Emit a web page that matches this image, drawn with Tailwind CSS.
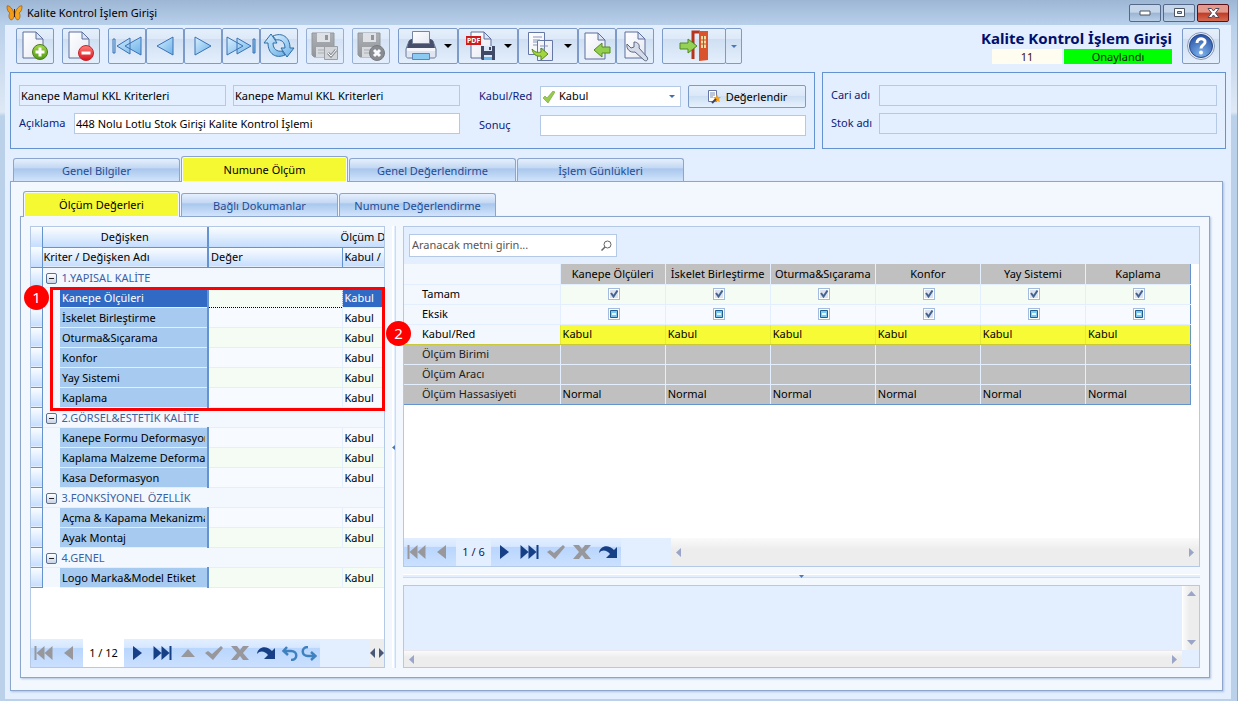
<!DOCTYPE html>
<html lang="tr">
<head>
  <meta charset="UTF-8" />
  <meta name="viewport" content="width=device-width, initial-scale=1.0"/>
  <title>Kalite Kontrol İşlem Girişi</title>
  <script src="https://cdn.jsdelivr.net/npm/@tailwindcss/browser@4"></script>
  <style>
    body {
      font-family: 'Noto Sans', 'Open Sans', sans-serif;
    }

    .tool {
      height: 36px;
      display: flex;
      align-items: center;
      justify-content: center;
      border: 1px solid #7d9bc8;
      border-radius: 2px;
      background: linear-gradient(#e6f0fc 0%, #dde9f8 28%, #cfdff2 30%, #e4effc 100%);
    }

    .tab {
      border: 1px solid #8ca5cc;
      border-bottom: 0;
      border-radius: 3px 3px 0 0;
      padding-top: 1px;
      color: #1e4c95;
      background: linear-gradient(#e6f0fd 0%, #c3d8f3 40%, #a9c7ed 45%, #d2e4fb 100%);
    }

    .tab-active {
      color: #000;
      background: #f5f932;
      box-shadow: inset 0 0 0 1px #f4f8ff;
    }

    .field {
      height: 21px;
      border: 1px solid #b3c9e6;
      padding: 0 1px 1px;
      color: #000;
    }

    .head {
      background: linear-gradient(#fbfdff, #c5ddfd);
    }
  </style>
</head>
<body class="flex min-h-screen flex-col border-r border-[#4cc4e4] bg-[linear-gradient(to_bottom,#9cb6d4_0,#b9d0ea_25px,#dfe9f5_112px,#bbd1ea_116px,#bbd1ea_100%)] text-[11px] leading-4 text-black">

  <!-- icon library -->
  <svg class="absolute h-0 w-0">
    <defs>
      <linearGradient id="blue" x1="0" y1="0" x2="1" y2="1"><stop offset="0" stop-color="#d8efff"/><stop offset="1" stop-color="#6bb1e8"/></linearGradient>
      <linearGradient id="green" x1="0" y1="0" x2="0" y2="1"><stop offset="0" stop-color="#a5d84a"/><stop offset="1" stop-color="#4f9a12"/></linearGradient>
      <linearGradient id="red" x1="0" y1="0" x2="0" y2="1"><stop offset="0" stop-color="#ff8078"/><stop offset="1" stop-color="#d8101c"/></linearGradient>
      <linearGradient id="paper" x1="0" y1="0" x2="1" y2="1"><stop offset="0" stop-color="#fff"/><stop offset="1" stop-color="#e6e9f4"/></linearGradient>
      <linearGradient id="grey" x1="0" y1="0" x2="0" y2="1"><stop offset="0" stop-color="#9c9c9c"/><stop offset="1" stop-color="#777"/></linearGradient>
      <radialGradient id="ball" cx=".5" cy=".85" r=".8"><stop offset="0" stop-color="#7fb4ee"/><stop offset="1" stop-color="#2d56a8"/></radialGradient>
    </defs>
    <symbol id="page" viewBox="0 0 22 28"><path d="M1 1h13l7 7v19H1z" fill="url(#paper)" stroke="#5d6f9d"/><path d="M14 1v7h7z" fill="#dfe4f2" stroke="#5d6f9d"/></symbol>
    <symbol id="floppy" viewBox="0 0 24 26"><path d="M1 1h22v24H3l-2-2z" fill="url(#grey)" stroke="#7b7b7b"/><path d="M6 1h13v9H6z" fill="#ddd"/><path d="M14 3h3v5h-3z" fill="#777"/><path d="M5 15h15v10H5z" fill="#d2d2d2"/><path d="M7 18h11M7 21h11" stroke="#999"/></symbol>
    <symbol id="first" viewBox="0 0 18 14"><path d="M0 0h2v14H0zM10 0v14L2 7zM18 0v14L10 7z"/></symbol>
    <symbol id="prev" viewBox="0 0 9 14"><path d="M9 0v14L0 7z"/></symbol>
    <symbol id="next" viewBox="0 0 9 14"><path d="M0 0v14l9-7z"/></symbol>
    <symbol id="last" viewBox="0 0 18 14"><path d="M16 0h2v14h-2zM8 0v14l8-7zM0 0v14l8-7z"/></symbol>
    <symbol id="up" viewBox="0 0 14 8"><path d="M0 8h14L7 0z"/></symbol>
    <symbol id="ok" viewBox="0 0 18 14"><path d="M0 7l3-2 4 3 9-8 2 2L8 14z"/></symbol>
    <symbol id="cancel" viewBox="0 0 18 14"><path d="M0 0h6l3 4 3-4h6l-6 7 6 7h-6l-3-4-3 4H0l6-7z"/></symbol>
    <symbol id="redo" viewBox="0 0 19 13"><path d="M0 7C1-1 10-2 15 4l3-3v11H7l4-4C8 4 3 3 0 7z"/></symbol>
    <symbol id="undo" viewBox="0 0 16 15"><path d="M5 1L1.500 5 6 9M2 5h7c7 0 7 9 0 9" fill="none" stroke="currentColor" stroke-width="2.500"/></symbol>
    <symbol id="redo2" viewBox="0 0 16 15"><path d="M7 1C0 1 0 10 7 10h7M10 6l4.500 4-4.500 4" fill="none" stroke="currentColor" stroke-width="2.500"/></symbol>
    <symbol id="down" viewBox="0 0 8 4"><path d="M0 0h8L4 4z"/></symbol>
  </svg>

  <header class="flex h-[25px] shrink-0 items-center pl-[6px] pr-[8px]">
    <svg class="mr-1 h-[17px] w-[17px]" viewBox="0 0 17 17">
      <path d="M8 9C6 3 2 1 1 2c0 4 1 6 3 7-2 2-1 6 1 7 2 0 3-3 3.500-5z" fill="#f29a1a" stroke="#8a4c0c" stroke-width=".6"/>
      <path d="M9 9c2-6 6-8 7-7 0 4-1 6-3 7 2 2 1 6-1 7-2 0-3-3-3.500-5z" fill="#f6a51f" stroke="#8a4c0c" stroke-width=".6"/>
      <path d="M8.500 5v8" stroke="#3a1c04"/>
    </svg>
    <h1 class="flex-1 pt-px text-[11px]">Kalite Kontrol İşlem Girişi</h1>
    <div class="flex gap-[2px]">
      <button aria-label="Küçült" class="flex h-[18px] w-8 items-center justify-center rounded-xs border border-[#54698a] bg-[linear-gradient(#c5d6ea_45%,#9cb5d2_50%,#b9cfe8)]"><svg width="12" height="6"><path d="M1 1h10v4H1z" fill="#fff" stroke="#4b5563"/></svg></button>
      <button aria-label="Büyüt" class="flex h-[18px] w-8 items-center justify-center rounded-xs border border-[#54698a] bg-[linear-gradient(#c5d6ea_45%,#9cb5d2_50%,#b9cfe8)]"><svg width="11" height="9"><path d="M.5.5h10v8H.5zM3.500 3.500h4v2h-4z" fill="#fff" stroke="#4b5563" fill-rule="evenodd"/></svg></button>
      <button aria-label="Kapat" class="flex h-[18px] w-8 items-center justify-center rounded-xs border border-[#5a1018] bg-[linear-gradient(#e39a8c_45%,#c03a28_50%,#d56a50)]"><svg width="13" height="10" viewBox="0 0 13 10"><path d="M1 .5h3.500l2 2.500 2-2.500H12L8.500 5 12 9.500H8.500L6.500 7l-2 2.500H1L4.500 5z" fill="#fff" stroke="#4b4b5f"/></svg></button>
    </div>
  </header>

  <main class="mb-[2px] ml-[5px] mr-[6px] flex flex-1 flex-col bg-[#e3efff] pb-2 pt-[3px]">
    <div class="flex shrink-0 pl-[11px] pr-[11px]">
      <button aria-label="Yeni" class="tool mr-2 w-[38px]"><svg width="28" height="32" viewBox="0 0 28 32"><use href="#page" x="1" y="1" width="22" height="28"/><circle cx="19" cy="22" r="7.500" fill="url(#green)" stroke="#4c7a1c"/><path d="M19 17.500v9M14.500 22h9" stroke="#fff" stroke-width="3"/></svg></button>
      <button aria-label="Sil" class="tool mr-2 w-[38px]"><svg width="28" height="32" viewBox="0 0 28 32"><use href="#page" x="1" y="1" width="22" height="28"/><circle cx="19" cy="23" r="7.500" fill="url(#red)" stroke="#c4262c"/><path d="M14.500 21.500h9v3h-9z" fill="#fff"/></svg></button>
      <button aria-label="İlk" class="tool w-[38px]"><svg width="30" height="20" viewBox="0 0 30 20"><path d="M1 3h2v14H1zM18 2v16L5 10zM29 1v18L13 10z" fill="url(#blue)" stroke="#3a72b4"/></svg></button>
      <button aria-label="Önceki" class="tool w-[38px]"><svg width="20" height="20" viewBox="0 0 20 20"><path d="M18 1v18L2 10z" fill="url(#blue)" stroke="#3a72b4"/></svg></button>
      <button aria-label="Sonraki" class="tool w-[38px]"><svg width="20" height="20" viewBox="0 0 20 20"><path d="M2 1v18l16-9z" fill="url(#blue)" stroke="#3a72b4"/></svg></button>
      <button aria-label="Son" class="tool w-[38px]"><svg width="30" height="20" viewBox="0 0 30 20"><path d="M27 3h2v14h-2zM11 2v16l14-8zM1 1v18l16-9z" fill="url(#blue)" stroke="#3a72b4"/></svg></button>
      <button aria-label="Yenile" class="tool mr-2 w-[38px]"><svg width="32" height="26" viewBox="0 0 32 26"><path d="M1 10l7-9 6 9h-4c0 6 4 9 9 8l3 4C13 26 5 21 5 10z" fill="url(#blue)" stroke="#2f6ca5"/><path d="M31 15l-7 9-6-9h4c0-6-4-9-9-8l-3-4C19-1 27 4 27 15z" fill="url(#blue)" stroke="#2f6ca5"/></svg></button>
      <button aria-label="Kaydet" class="tool mr-2 w-[38px] opacity-75"><svg width="30" height="30" viewBox="0 0 30 30"><use href="#floppy" x="1" y="1" width="24" height="26"/><path d="M14.500 15.500h13v13h-13z" fill="#ccc" stroke="#858585"/><path d="M18 22l3 3 5-6" fill="none" stroke="#777" stroke-width="3"/><path d="M18 22l3 3 5-6" fill="none" stroke="#fff"/></svg></button>
      <button aria-label="Kaydetme" class="tool mr-2 w-[38px] opacity-75"><svg width="30" height="30" viewBox="0 0 30 30"><use href="#floppy" x="1" y="1" width="24" height="26"/><circle cx="21" cy="22" r="7.500" fill="#6b6b6b" stroke="#555"/><path d="M18 19l6 6M24 19l-6 6" stroke="#fff" stroke-width="3"/></svg></button>
      <button aria-label="Yazdır" class="tool w-[60px] gap-[7px]"><svg width="32" height="32" viewBox="0 0 32 32"><path d="M4 11l3-1h18l3 1 3 8v7c0 1-1 2-2 2H3c-1 0-2-1-2-2v-7z" fill="#dfe5f1" stroke="#6a7a9c"/><path d="M4 11c1-2 3-2 3-2h18s2 0 3 2l2 7H2z" fill="#46506a"/><path d="M7.500 1.500h17v12h-17z" fill="url(#paper)" stroke="#7785a5"/><path d="M2 18h28v3H2z" fill="#f4f6fb"/><path d="M7.500 23.500h17v6h-17z" fill="#8ccaf2" stroke="#5f86b5"/></svg><svg width="8" height="4"><use href="#down"/></svg></button>
      <button aria-label="PDF" class="tool w-[60px] gap-[7px]"><svg width="32" height="32" viewBox="0 0 32 32"><use href="#page" x="5" y="1" width="22" height="28"/><path d="M1 6h15v9H1z" fill="#cc1c20"/><text x="2" y="13" font-size="7" font-weight="700" fill="#fff">PDF</text><path d="M16 16h14v14H17l-1-1z" fill="#3e4966"/><path d="M19 16h8v5h-8zM19 25h8v5h-8z" fill="#dbe6f6"/><path d="M24 17h2v3h-2z" fill="#3e4966"/><path d="M19 27h8v3h-8z" fill="#69b7ef"/></svg><svg width="8" height="4"><use href="#down"/></svg></button>
      <button aria-label="Kopyala" class="tool w-[60px] gap-[7px]"><svg width="32" height="32" viewBox="0 0 32 32"><path d="M3.500 2.500h16v22h-16zM12.500 10.500h15v20h-15z" fill="url(#paper)" stroke="#6577a6"/><path d="M8 7h9M8 10h7M8 12h4M8 15h4M15 16h8M15 19h5" stroke="#8795bb"/><path d="M7 19c3 3 5 4 9 3v-4l7 6-7 6v-4c-5 1-8-2-9-7z" fill="#a4d63c" stroke="#568b1c"/></svg><svg width="8" height="4"><use href="#down"/></svg></button>
      <button aria-label="Geri al" class="tool w-[38px]"><svg width="28" height="32" viewBox="0 0 28 32"><use href="#page" x="1" y="2" width="22" height="28"/><path d="M11 20l8-7v4h8v6h-8v4z" fill="#93cf4e" stroke="#568b1c"/></svg></button>
      <button aria-label="Ayarlar" class="tool mr-2 w-[38px]"><svg width="28" height="32" viewBox="0 0 28 32"><use href="#page" x="3" y="1" width="22" height="28"/><path d="M6 14l4 4 3-1v-5c4 0 6 3 5 6l8 9c2 3-1 5-3 3l-9-8c-5 1-9-3-8-8z" fill="#d5dbe8" stroke="#5b6781"/></svg></button>
      <div class="flex">
        <button aria-label="Çıkış" class="tool w-[64px]"><svg width="30" height="32" viewBox="0 0 30 32"><path d="M14 29V2h7" fill="none" stroke="#b8331c" stroke-width="3"/><path d="M20 1h9v29l-9 1z" fill="#d9532c"/><path d="M22 6h5v12h-5z" fill="#f5dca0"/><path d="M24.500 6v12M22 10h5M22 14h5" stroke="#b8552c"/><path d="M1 13h8V9l9 7-9 7v-4H1z" fill="#94d154" stroke="#4e8a24"/></svg></button>
        <button aria-label="Çıkış seçenekleri" class="tool -ml-px w-[17px]"><svg class="fill-[#4d78b8]" width="6" height="3" viewBox="0 0 8 4"><use href="#down"/></svg></button>
      </div>
      <div class="ml-auto mr-[10px]">
        <h2 class="h-[21px] text-right text-[15px] font-bold leading-5 text-[#00106c]">Kalite Kontrol İşlem Girişi</h2>
        <div class="flex justify-end gap-[2px] text-center text-[11px] leading-[15px]">
          <div class="w-[70px] bg-[#fffcf0] text-[#30101c]">11</div>
          <div class="w-[108px] bg-[#00ff00] text-[#102010]">Onaylandı</div>
        </div>
      </div>
      <button aria-label="Yardım" class="tool w-[38px]"><svg width="30" height="30" viewBox="0 0 30 30"><circle cx="15" cy="15" r="13.500" fill="#e8eef8" stroke="#8a9ab8"/><circle cx="15" cy="15" r="11.500" fill="url(#ball)" stroke="#27488c"/><path d="M11 12c0-6 9-5 8-.5-.5 2.500-4 2.500-4 6" fill="none" stroke="#fff" stroke-width="3"/><circle cx="15" cy="21.500" r="2" fill="#fff"/></svg></button>
    </div>

    <div class="mt-2 flex shrink-0 gap-[7px] pl-[5px] pr-[5px] text-[#0c1c7c]">
      <section class="flex h-[77px] w-[805px] gap-[19px] border border-[#6593cf] px-2 pt-3">
        <div class="flex w-[441px] flex-col gap-[7px]">
          <div class="flex gap-[7px]">
            <input aria-label="Kriter kodu" class="field w-[207px]" value="Kanepe Mamul KKL Kriterleri" />
            <input aria-label="Kriter adı" class="field min-w-0 flex-1" value="Kanepe Mamul KKL Kriterleri" />
          </div>
          <div class="flex items-center">
            <label for="aciklama" class="w-[55px] pb-[2px]">Açıklama</label>
            <input id="aciklama" class="field min-w-0 flex-1 bg-white" value="448 Nolu Lotlu Stok Girişi Kalite Kontrol İşlemi" />
          </div>
        </div>
        <div class="flex flex-1 flex-col gap-[7px]">
          <div class="flex h-[23px] items-center">
            <label for="kabul" class="w-[61px] pb-[2px]">Kabul/Red</label>
            <div class="relative w-[141px]">
              <select id="kabul" class="field block w-full appearance-none bg-white pl-[18px]!"><option>Kabul</option><option>Red</option></select>
              <svg class="pointer-events-none absolute left-[3px] top-[5px]" width="12" height="12" viewBox="0 0 12 12"><path d="M0 7l2-2 2 2 6-7 2 1-7 11z" fill="#9aca4e" stroke="#6ba236" stroke-width=".6"/></svg>
              <svg class="pointer-events-none absolute right-[6px] top-[9px] fill-[#3f6fae]" width="6" height="3" viewBox="0 0 8 4"><use href="#down"/></svg>
            </div>
            <button class="ml-[7px] flex h-[23px] flex-1 items-center justify-center gap-[5px] rounded-xs border border-[#7d9bc8] bg-[linear-gradient(#e6f0fc,#dbe8f8_45%,#cddff2_50%,#e6f1fd)] text-black">
              <svg width="14" height="14" viewBox="0 0 14 14"><path d="M1.500.5h8v11h-8z" fill="#fff" stroke="#6577a6"/><path d="M3 3h5M3 5h5M3 7h3" stroke="#7d8db5"/><path d="M10 4l1 3 3 0-2 2 1 3-3-1-3 1 1-3-2-2h3z" fill="#f8a21c"/><path d="M9 9l-4 4" stroke="#3c4664" stroke-width="2"/></svg>
              Değerlendir
            </button>
          </div>
          <div class="flex items-center">
            <label for="sonuc" class="w-[61px] pb-[2px]">Sonuç</label>
            <input id="sonuc" class="field min-w-0 flex-1 bg-white" />
          </div>
        </div>
      </section>
      <section class="flex h-[77px] flex-1 flex-col gap-[7px] border border-[#6593cf] px-2 pt-3">
        <div class="flex items-center"><label for="cari" class="w-[48px] pb-[2px]">Cari adı</label><input id="cari" class="field min-w-0 flex-1" /></div>
        <div class="flex items-center"><label for="stok" class="w-[48px] pb-[2px]">Stok adı</label><input id="stok" class="field min-w-0 flex-1" /></div>
      </section>
    </div>

    <nav class="relative z-10 mt-[7px] flex h-[25px] shrink-0 items-end gap-px pl-2">
      <button class="tab h-[23px] w-[167px]">Genel Bilgiler</button>
      <button class="tab tab-active -mb-px h-[26px] w-[167px]">Numune Ölçüm</button>
      <button class="tab h-[23px] w-[167px]">Genel Değerlendirme</button>
      <button class="tab h-[23px] w-[167px]">İşlem Günlükleri</button>
    </nav>

    <div class="ml-[5px] mr-2 flex flex-1 flex-col border border-[#8ca5cc] bg-[#f3f8ff] pb-3 pl-[9px] pr-3 pt-[9px] shadow-[1px_1px_2px_#b0c2dd]">
      <nav class="relative z-10 flex h-[25px] shrink-0 items-end gap-px pl-[3px]">
        <button class="tab tab-active -mb-px h-[26px] w-[157px]">Ölçüm Değerleri</button>
        <button class="tab h-[23px] w-[157px]">Bağlı Dokumanlar</button>
        <button class="tab h-[23px] w-[157px]">Numune Değerlendirme</button>
      </nav>

      <div class="flex flex-1 border border-[#8ca5cc] p-[9px] shadow-[1px_1px_2px_#b0c2dd]">

        <!-- criteria tree -->
        <section class="relative flex w-[355px] flex-col border border-[#b3c9e6] bg-white">
          <div class="flex-1 overflow-hidden">
            <table class="w-[530px] table-fixed border-collapse">
              <colgroup><col class="w-[11px]"/><col class="w-[18px]"/><col class="w-[148px]"/><col class="w-[134px]"/><col class="w-[219px]"/></colgroup>
              <thead>
                <tr class="h-5">
                  <th class="head border-r border-[#6593cf] p-0"></th>
                  <th colspan="2" class="head border-b border-r-2 border-[#6593cf] p-0 font-normal">Değişken</th>
                  <th colspan="2" class="head border-b border-[#6593cf] p-0 pr-1 font-normal">Ölçüm Değerleri</th>
                </tr>
                <tr class="h-5 text-left">
                  <th class="head border-b border-r border-[#6593cf] p-0"></th>
                  <th colspan="2" class="head border-b border-r-2 border-[#6593cf] p-0 pl-px font-normal">Kriter / Değişken Adı</th>
                  <th class="head border-b border-r border-[#6593cf] p-0 pl-[2px] font-normal">Değer</th>
                  <th class="head border-b border-[#6593cf] p-0 pl-[2px] font-normal">Kabul / Red</th>
                </tr>
              </thead>
              <tbody id="criteria"></tbody>
            </table>
          </div>
          <div class="flex h-7 bg-[#e3efff] text-[#98989c]">
            <div class="flex w-[289px] items-center bg-[linear-gradient(#e3efff_0,#d6e7ff_30%,#b9d6fd_34%,#cbe0ff_100%)]">
              <button aria-label="İlk kayıt" class="ml-[3px]"><svg class="fill-current" width="19" height="14"><use href="#first"/></svg></button>
              <button aria-label="Önceki kayıt" class="ml-[11px]"><svg class="fill-current" width="9" height="14"><use href="#prev"/></svg></button>
              <span class="ml-[10px] h-full w-[41px] bg-white text-center leading-7 text-black">1 / 12</span>
              <button aria-label="Sonraki kayıt" class="ml-[9px] text-[#163f86]"><svg class="fill-current" width="9" height="14"><use href="#next"/></svg></button>
              <button aria-label="Son kayıt" class="ml-[11px] text-[#163f86]"><svg class="fill-current" width="19" height="14"><use href="#last"/></svg></button>
              <button aria-label="Düzenle" class="ml-[9px]"><svg class="fill-current" width="14" height="8"><use href="#up"/></svg></button>
              <button aria-label="Onayla" class="ml-[10px]"><svg class="fill-current" width="18" height="14"><use href="#ok"/></svg></button>
              <button aria-label="Vazgeç" class="ml-2"><svg class="fill-current" width="18" height="14"><use href="#cancel"/></svg></button>
              <button aria-label="Yenile" class="ml-2 text-[#163f86]"><svg class="fill-current" width="19" height="13"><use href="#redo"/></svg></button>
              <button aria-label="Geri" class="ml-[6px] text-[#3f80bf]"><svg class="fill-none" width="16" height="15"><use href="#undo"/></svg></button>
              <button aria-label="İleri" class="ml-[3px] text-[#3f80bf]"><svg class="fill-none" width="16" height="15"><use href="#redo2"/></svg></button>
            </div>
            <div class="ml-auto flex w-[14px] items-center justify-between bg-[#ededed] fill-[#4a5878]">
              <svg width="5" height="10" viewBox="0 0 9 14" preserveAspectRatio="none"><path d="M9 0v14L0 7z"/></svg>
              <svg width="5" height="10" viewBox="0 0 9 14" preserveAspectRatio="none"><path d="M0 0v14l9-7z"/></svg>
            </div>
          </div>
          <div class="pointer-events-none absolute left-[19px] top-[60px] h-[124px] w-[335px] border-[3px] border-[#ff0000]"></div>
          <div class="absolute left-[-7px] top-[58px] flex h-[25px] w-[25px] items-center justify-center rounded-full bg-[#ff0000] pb-[2px] text-[15px] text-white">1</div>
          <div class="absolute left-[355px] top-[94px] z-10 flex h-[25px] w-[25px] items-center justify-center rounded-full bg-[#ff0000] pb-[2px] text-[15px] text-white">2</div>
        </section>

        <div class="mx-[7px] flex w-1 items-center border-l-2 border-r border-l-white border-r-[#c5ddfd] bg-[#e3efff]">
          <svg class="-ml-[2px] shrink-0 fill-[#4d78b8]" width="3" height="5" viewBox="0 0 3 5"><path d="M3 0v5L0 2.500z"/></svg>
        </div>

        <div class="flex min-w-0 flex-1 flex-col">
          <!-- sample measurements -->
          <section class="flex flex-1 flex-col border border-[#b3c9e6] bg-white">
            <div class="flex h-[37px] bg-[#e3efff] pl-[5px] pt-[7px]">
              <div class="relative w-[208px]">
                <input type="search" aria-label="Ara" placeholder="Aranacak metni girin..." class="h-[23px] w-full border border-[#b3c9e6] bg-white px-[2px] pb-[2px] placeholder:text-[#555]" />
                <svg class="absolute right-[5px] top-[6px]" width="11" height="11" viewBox="0 0 11 11"><circle cx="6.500" cy="4.500" r="3.500" fill="none" stroke="#666"/><path d="M4 7L.5 10.500" stroke="#666" stroke-width="1.500"/></svg>
              </div>
            </div>
            <table class="w-[787px] table-fixed border-collapse">
              <thead><tr id="sample-head" class="h-5"></tr></thead>
              <tbody id="samples"></tbody>
            </table>
            <div class="mt-auto flex h-7 bg-[#e3efff] text-[#98989c]">
              <div class="flex w-[217px] items-center bg-[linear-gradient(#e3efff_0,#d6e7ff_30%,#b9d6fd_34%,#cbe0ff_100%)]">
                <button aria-label="İlk kayıt" class="ml-[3px]"><svg class="fill-current" width="19" height="14"><use href="#first"/></svg></button>
                <button aria-label="Önceki kayıt" class="ml-[11px]"><svg class="fill-current" width="9" height="14"><use href="#prev"/></svg></button>
                <span class="ml-[10px] h-full w-[35px] bg-[#e3efff] text-center leading-7 text-[#0c1c5c]">1 / 6</span>
                <button aria-label="Sonraki kayıt" class="ml-[9px] text-[#163f86]"><svg class="fill-current" width="9" height="14"><use href="#next"/></svg></button>
                <button aria-label="Son kayıt" class="ml-[11px] text-[#163f86]"><svg class="fill-current" width="19" height="14"><use href="#last"/></svg></button>
                <button aria-label="Onayla" class="ml-2"><svg class="fill-current" width="18" height="14"><use href="#ok"/></svg></button>
                <button aria-label="Vazgeç" class="ml-2"><svg class="fill-current" width="18" height="14"><use href="#cancel"/></svg></button>
                <button aria-label="Yenile" class="ml-2 text-[#163f86]"><svg class="fill-current" width="19" height="13"><use href="#redo"/></svg></button>
              </div>
              <div class="ml-[50px] flex flex-1 items-center justify-between bg-[linear-gradient(#fafafa,#ededed_40%)] px-[5px] fill-[#9aa5c8]">
                <svg width="5" height="9" viewBox="0 0 5 9"><path d="M5 0v9L0 4.500z"/></svg>
                <svg width="5" height="9" viewBox="0 0 5 9"><path d="M0 0v9l5-4.500z"/></svg>
              </div>
            </div>
          </section>

          <div class="my-[7px] flex h-1 justify-center border-b border-t border-b-[#c5ddfd] border-t-white bg-[#e3efff]">
            <svg class="fill-[#4d78b8]" width="5" height="3" viewBox="0 0 5 3"><path d="M0 0h5L2.500 3z"/></svg>
          </div>

          <section class="grid h-[83px] grid-cols-[1fr_17px] grid-rows-[1fr_17px] border border-[#b3c9e6] bg-[#e3efff]">
            <div></div>
            <div class="flex flex-col items-center justify-between border-l border-white bg-[linear-gradient(to_right,#fafafa,#ededed_40%)] py-[5px] fill-[#9aa5c8]">
              <svg width="9" height="5" viewBox="0 0 9 5"><path d="M0 5h9L4.500 0z"/></svg>
              <svg width="9" height="5" viewBox="0 0 9 5"><path d="M0 0h9L4.500 5z"/></svg>
            </div>
            <div class="flex items-center justify-between border-t border-[#e8e8ee] bg-[linear-gradient(#fafafa,#ededed_40%)] px-[5px] fill-[#9aa5c8]">
              <svg width="5" height="9" viewBox="0 0 5 9"><path d="M5 0v9L0 4.500z"/></svg>
              <svg width="5" height="9" viewBox="0 0 5 9"><path d="M0 0v9l5-4.500z"/></svg>
            </div>
          </section>
        </div>
      </div>
    </div>
  </main>

  <script>
    const groups = [
      ["1.YAPISAL KALİTE", ["Kanepe Ölçüleri", "İskelet Birleştirme", "Oturma&Sıçarama", "Konfor", "Yay Sistemi", "Kaplama"]],
      ["2.GÖRSEL&ESTETİK KALİTE", ["Kanepe Formu Deformasyonu", "Kaplama Malzeme Deformasyonu", "Kasa Deformasyon"]],
      ["3.FONKSİYONEL ÖZELLİK", ["Açma & Kapama Mekanizması", "Ayak Montaj"]],
      ["4.GENEL", ["Logo Marka&Model Etiket"]]
    ];
    const esc = (s) => s.replace(/&/g, "&amp;");
    const handle = '<td class="head border-b border-r border-[#6593cf] p-0"></td>';

    // group rows count too, so the stripes follow the row number
    let rows = "";
    let n = 0;
    groups.forEach(([title, items]) => {
      rows += `<tr class="h-5">${handle}
        <td colspan="4" class="border-b border-[#e3efff] bg-[#f3f8ff] p-0 pt-[2px] text-[#3a62a4]"><div class="flex items-center gap-[5px] pl-[3px]">
          <button aria-label="Daralt" class="flex h-[11px] w-[11px] items-center justify-center rounded-xs border border-[#5a7296] bg-[linear-gradient(#fff,#c8d4e6)]"><svg width="5" height="1"><path d="M0 0h5v1H0z" fill="#222"/></svg></button>${esc(title)}</div></td></tr>`;
      n++;
      items.forEach((name) => {
        const selected = n === 1;
        const shade = n % 2 ? "bg-[#f5fcf3]" : "bg-[#f7fbff]";
        const nameCell = selected ? "bg-[#316ac5] text-white" : "bg-[#a6caf0]";
        const kabulCell = selected ? "bg-[linear-gradient(to_right,#316ac5_42px,#f5fcf3_42px)] text-white" : shade;
        const line = selected ? "border-b border-dotted border-b-black" : "border-b border-b-[#e3efff]";
        rows += `<tr class="h-5">${handle}
          <td class="bg-[#f3f8ff] p-0"></td>
          <td class="${nameCell} border-b border-r-2 border-b-[#e3efff] border-r-[#6593cf] p-0 pt-[2px]"><div class="mr-[2px] overflow-hidden whitespace-nowrap pl-[2px]">${esc(name)}</div></td>
          <td class="${shade} ${line} border-r border-r-[#e3efff] p-0"></td>
          <td class="${kabulCell} border-b border-[#e3efff] p-0 pl-[2px] pt-[2px]">Kabul</td></tr>`;
        n++;
      });
    });
    document.getElementById("criteria").innerHTML = rows;

    const columns = groups[0][1];
    document.getElementById("sample-head").innerHTML = '<th class="w-[156px] border-b border-r border-[#e3efff] bg-[#f3f8ff] p-0"></th>' +
      columns.map((c) => `<th class="w-[105px] border-b border-r border-[#e3efff] bg-[#c0c0c0] p-0 font-normal whitespace-nowrap last:border-r-[#6593cf]">${esc(c)}</th>`).join("");

    // checked or indeterminate three-state box
    const box = (on, label) => `<div class="relative mx-auto h-3 w-3">
      <input type="checkbox" aria-label="${esc(label)}" ${on ? "checked" : ""} class="block h-3 w-3 appearance-none border border-[#a3bbdf] bg-white" />
      <svg class="pointer-events-none absolute left-0 top-0" width="12" height="12">${on
        ? '<path d="M2 2h8v8H2z" fill="#dce3ee"/><path d="M3 5l2.500 3.500L9.500 2.500" fill="none" stroke="#44628f" stroke-width="2"/>'
        : '<path d="M2.500 2.500h7v7h-7z" fill="#7cc8f0" stroke="#1f5f8c"/><path d="M4 5h4v2H4z" fill="#e6f8ff"/>'}</svg></div>`;

    const samples = [
      { name: "Tamam", checks: [1, 1, 1, 1, 1, 1], bg: "bg-[#f5fcf3]" },
      { name: "Eksik", checks: [0, 0, 0, 1, 0, 0], bg: "bg-[#f7fbff]" },
      { name: "Kabul/Red", text: "Kabul", bg: "bg-[#f7fb36]", edge: "border-b-[#c9c93a] border-r-[#e6ea38]" },
      { name: "Ölçüm Birimi", text: "", bg: "bg-[#c0c0c0]", grey: true },
      { name: "Ölçüm Aracı", text: "", bg: "bg-[#c0c0c0]", grey: true },
      { name: "Ölçüm Hassasiyeti", text: "Normal", bg: "bg-[#c0c0c0]", grey: true, edge: "border-b-[#6593cf] border-r-[#e3efff]" }
    ];
    document.getElementById("samples").innerHTML = samples.map((r) => {
      const edge = r.edge || "border-b-[#e3efff] border-r-[#e3efff]";
      const first = r.grey ? "bg-[#c0c0c0] text-[#202020]" : "bg-[#f3f8ff]";
      const cells = columns.map((c, i) =>
        `<td class="${r.bg} ${edge} border-b border-r p-0 pl-[2px] last:border-r-[#6593cf]">${r.checks ? box(r.checks[i], r.name + " " + c) : r.text}</td>`).join("");
      return `<tr class="h-5"><th class="${first} ${edge} border-b border-r p-0 pl-[18px] text-left font-normal">${r.name}</th>${cells}</tr>`;
    }).join("");
  </script>
</body>
</html>
